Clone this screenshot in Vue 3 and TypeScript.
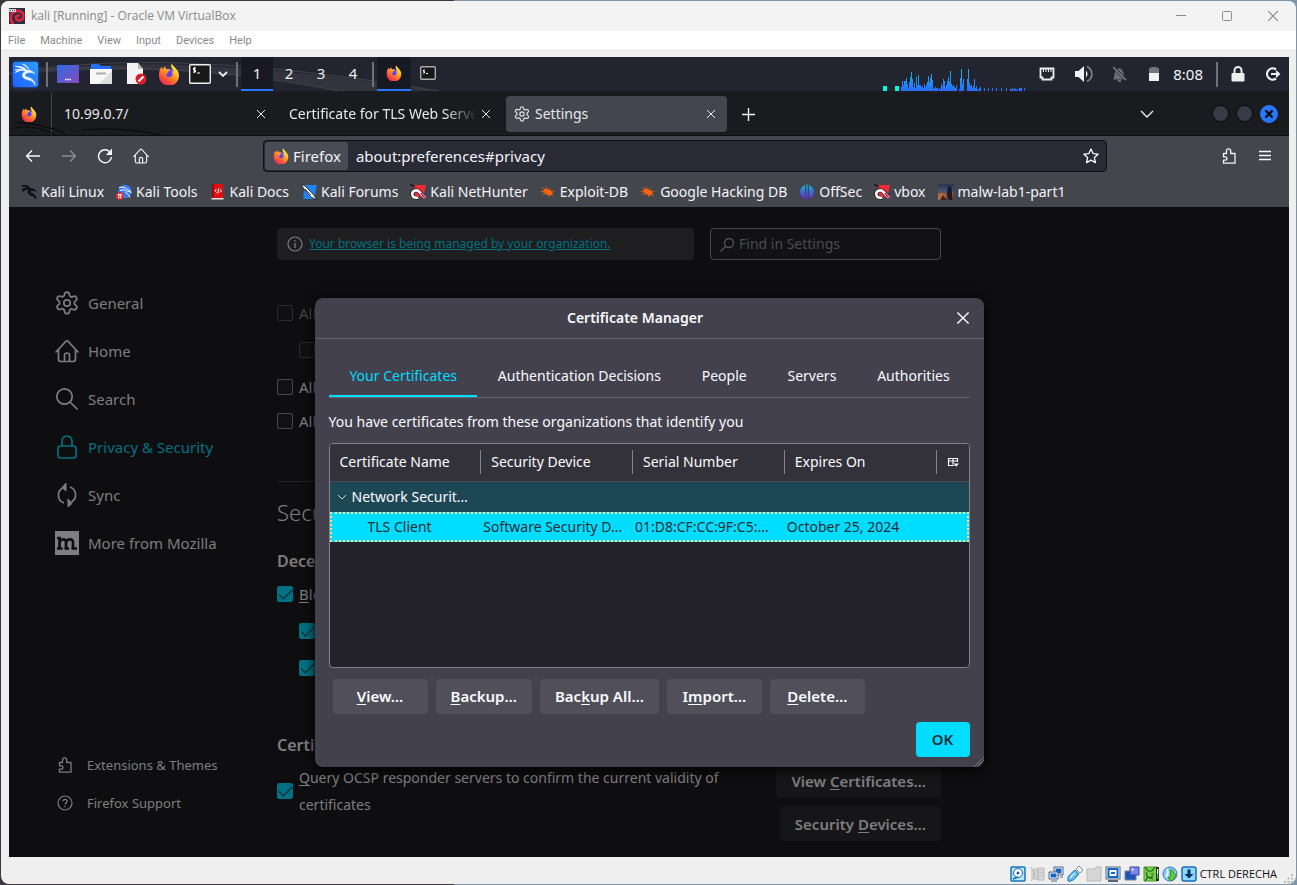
<script setup lang="ts">
import { ref } from 'vue'

const menus: string[] = ['File', 'Machine', 'View', 'Input', 'Devices', 'Help']
const workspaces: number[] = [1, 2, 3, 4]

interface Bookmark { label: string; icon: string }
const bookmarks: Bookmark[] = [
  { label: 'Kali Linux', icon: 'dragon-dark' },
  { label: 'Kali Tools', icon: 'tools' },
  { label: 'Kali Docs', icon: 'docs' },
  { label: 'Kali Forums', icon: 'forums' },
  { label: 'Kali NetHunter', icon: 'nethunter' },
  { label: 'Exploit-DB', icon: 'bug' },
  { label: 'Google Hacking DB', icon: 'bug' },
  { label: 'OffSec', icon: 'offsec' },
  { label: 'vbox', icon: 'nethunter' },
  { label: 'malw-lab1-part1', icon: 'photo' },
]

interface Category { label: string; icon: string }
const categories: Category[] = [
  { label: 'General', icon: 'gear' },
  { label: 'Home', icon: 'home' },
  { label: 'Search', icon: 'search' },
  { label: 'Privacy & Security', icon: 'padlock' },
  { label: 'Sync', icon: 'sync' },
  { label: 'More from Mozilla', icon: 'mozilla' },
]
const activeCategory = ref('Privacy & Security')

const tabs: string[] = ['Your Certificates', 'Authentication Decisions', 'People', 'Servers', 'Authorities']
const activeTab = ref('Your Certificates')
const columns: string[] = ['Certificate Name', 'Security Device', 'Serial Number', 'Expires On']

interface Action { before: string; key: string; after: string }
const actions: Action[] = [
  { before: '', key: 'V', after: 'iew…' },
  { before: '', key: 'B', after: 'ackup…' },
  { before: 'Bac', key: 'k', after: 'up All…' },
  { before: 'I', key: 'm', after: 'port…' },
  { before: '', key: 'D', after: 'elete…' },
]

const address = ref('about:preferences#privacy')
const query = ref('')

const load: number[] = [
  4, 10, 6, 10, 10, 13, 7, 3, 9, 14, 19, 12, 4, 8, 3, 14, 6, 16, 6, 6, 4, 5, 3, 7, 4, 6, 9, 15, 9, 13, 17, 11, 2, 3,
  4, 3, 3, 1, 3, 2, 7, 5, 12, 10, 4, 6, 10, 14, 9, 20, 7, 5, 6, 4, 3, 6, 0, 0, 2, 13, 22, 7, 12, 0, 0, 0, 12, 22, 8, 5,
  6, 3, 5, 12, 3, 5, 2, 1, 3, 4, 0, 0, 0, 3, 0, 0, 0, 3, 0, 0, 0, 3, 0, 0, 0, 3, 0, 0, 0, 0, 3, 0, 0, 0, 0, 3, 0, 0,
  0, 2, 2, 3, 1, 3, 2, 1, 2, 0, 3, 3, 3, 0, 0, 3,
]

const devices: string[] = ['disk', 'optical', 'network', 'usb', 'folder', 'display', 'record', 'cpu', 'mouse', 'host']
</script>

<template>
  <div class="desktop">
    <svg class="sprite" width="0" height="0" aria-hidden="true">
      <defs>
        <linearGradient id="fx-fire" x1="0.8" y1="0.1" x2="0.2" y2="1">
          <stop offset="0" stop-color="#fff24a" /><stop offset="0.4" stop-color="#ff9a24" />
          <stop offset="0.75" stop-color="#ff4a3c" /><stop offset="1" stop-color="#e3206a" />
        </linearGradient>
        <linearGradient id="desk" x1="0" y1="0" x2="1" y2="1">
          <stop offset="0" stop-color="#2b6be0" /><stop offset="1" stop-color="#8a4ac0" />
        </linearGradient>
        <linearGradient id="off" x1="0" y1="0" x2="0" y2="1">
          <stop offset="0" stop-color="#0fb6d8" /><stop offset="1" stop-color="#6a1fe0" />
        </linearGradient>
        <linearGradient id="load" gradientUnits="userSpaceOnUse" x1="0" y1="0" x2="0" y2="24">
          <stop offset="0" stop-color="#14c4dc" /><stop offset="1" stop-color="#276cff" />
        </linearGradient>
        <linearGradient id="sky" x1="0" y1="0" x2="0" y2="1">
          <stop offset="0" stop-color="#2a3350" /><stop offset="0.5" stop-color="#4a5872" />
          <stop offset="0.6" stop-color="#8c4f2c" /><stop offset="1" stop-color="#5a2f24" />
        </linearGradient>
      </defs>
      <symbol id="firefox" viewBox="0 0 22 22">
        <circle cx="11" cy="12.5" r="7" fill="#5a45e8" />
        <path d="M14 0.500c.5 2.200 2 3 3.600 4.700 2.200 2.300 3.600 4.600 3.400 8A10 9.600 0 0 1 1 13C.7 9 1.900 6 3.400 3.700c.3 1 .8 1.700 1.300 2.200C6 3.900 7.600 3.400 7.600 3.400c-.5 1.200.2 2.600 1.800 2.800l2.900.4c-.2 1.100-1.100 1.700-2.600 2.300-.5 1.400.2 1.700-1.500 2.700-.2 2.700 3.200 3.500 5.100 2 1.800-1.500 1.500-4.100-.4-5.600 1.500 0 2.300.8 2.700 1.500C15.400 6 11.500 4.500 14 .5z" fill="url(#fx-fire)" />
      </symbol>
      <symbol id="dragon" viewBox="0 0 24 24">
        <path d="M1.500 3.500c5-.2 9.500 1 12 4 3.500.1 6 1 8 3.500-2.500-1.500-5-1.500-7.500-.8-3 .9-3.500 3.300-1 4.300 4 1.300 8 2.500 9 8.500-2-4.500-5-5-9-6-5-1.300-5.500-6-1-8.500C9.500 6 6 4.500 1.500 3.500zM1 7.500c4-1.200 7.500-1 10 .2C7.800 7.500 5 7.800 1.500 10c1.500-2.200 3.500-2.700 5-2.900-2-.2-3.500 0-5.500.4zM9 1.200c3.500.8 5.500 2.800 6.500 5.300C13.500 4 12 3 9 1.200z" fill="currentColor" stroke="currentColor" stroke-width=".8" />
      </symbol>
      <symbol id="dragon-dark" viewBox="0 0 16 16">
        <path d="M0.500 1.500C5 1 8 2 9.500 4.800c2.500 0 4 .5 5.500 2.500-3-1.600-6-.7-6.200.7-.2 1.500 5.700.5 6.200 7-1.800-4.300-7-2.500-8-6.500C6.700 6.600 8 5.500 8 5 6 3 3.500 2.500.5 1.500zM1 5.500C3.500 4 6 4 7.500 5 5 5 3 5.800 1 8" fill="#101114" stroke="#101114" />
      </symbol>
      <symbol id="tools" viewBox="0 0 16 16">
        <circle cx="9" cy="7.500" r="6.800" fill="#3a7cf0" />
        <path d="M3 3.500c4-1 7 0 8 2 2 0 3 1 4 3-3-2-5-1-5 0 0 1.500 3 1 3.500 5M4 6.500c3-1 5-.5 6 0" fill="none" stroke="#fff" />
        <circle cx="3.800" cy="12" r="3.800" fill="#e8262c" />
        <path d="M1.800 10.500h4M2.800 10.500v4M4.800 10.500v4" stroke="#fff" />
      </symbol>
      <symbol id="docs" viewBox="0 0 16 16">
        <path d="M2 0h11v14H2z" fill="#e00d10" /><path d="M2 0h2v14H2z" fill="#9a080c" />
        <path d="M1.500 14h12v1.500h-12z" fill="#f2e4e4" />
        <path d="M6.500 5 4.800 6.800l1.700 1.700M9.800 5l1.700 1.700-1.700 1.800M8.800 4.500l-1.200 5" fill="none" stroke="#fff" />
      </symbol>
      <symbol id="forums" viewBox="0 0 16 16">
        <path d="M4 1h12l-3 14H2z" fill="#1f83f4" />
        <path d="M0 0l4 2 8 8 4 6-6-3-7-8z" fill="#fff" stroke="#14161c" stroke-width=".8" /><path d="M4 5l6 6" stroke="#14161c" stroke-width=".8" />
      </symbol>
      <symbol id="nethunter" viewBox="0 0 16 16">
        <path d="M3 1h13l-3 13-8-2z" fill="#f02b34" />
        <path d="M0 1c3-.5 4 1 5 2" fill="none" stroke="#14161c" stroke-width="1.500" />
        <path d="M15 14 9 7.500C6 5 2.200 7 2.200 10S5.500 14.500 8 14" fill="none" stroke="#14161c" stroke-width="4" />
        <path d="M15 14 9 7.500C6 5 2.200 7 2.200 10S5.500 14.500 8 13.500" fill="none" stroke="#fff" stroke-width="2.600" />
        <path d="m11 9 4 5.500" stroke="#e01540" stroke-width="1.500" />
      </symbol>
      <symbol id="bug" viewBox="0 0 16 16">
        <ellipse cx="8" cy="8" rx="5" ry="2.800" transform="rotate(28 8 8)" fill="#f2640f" />
        <path d="M1.500 3.500l4 2.500M6 2.500l1 3M.5 7.500l3.500 0M3.500 11.500l2-2M8.500 13l0-2M12 11l2 1.500M11 7l4 .5M1.500 10.500l3-2M10 5l1-1" stroke="#f2640f" stroke-width=".7" fill="none" />
      </symbol>
      <symbol id="offsec" viewBox="0 0 16 16">
        <path d="M6 1v14A7.500 7.500 0 0 1 6 1zM10 1v14a7.500 7.500 0 0 0 0-14zM7.300 .5h1.400v15H7.300z" fill="url(#off)" />
      </symbol>
      <symbol id="photo" viewBox="0 0 16 16">
        <path d="M0 0h16v16H0z" fill="url(#sky)" /><path d="M10 2h3l1 5v9h-3l-2-6z" fill="#191c2c" /><path d="M0 10l4-1 4 2v5H0z" fill="#b46a3c" /><path d="m2 16 3-5 4 5z" fill="#3b2530" />
      </symbol>
      <symbol id="gear" viewBox="0 0 24 24">
        <path d="M9.700 3.200Q10 1 12 1t2.300 2.200l.3 1.500 1.700 1 1.500-.6q2-.8 3 .9t-.7 3.100l-1.200 1v2l1.200 1q1.700 1.400.7 3.100t-3 .9l-1.500-.6-1.700 1-.3 1.500Q14 21 12 21t-2.300-2.200l-.3-1.500-1.700-1-1.500.6q-2 .8-3-.9t.7-3.100l1.200-1v-2l-1.200-1q-1.700-1.400-.7-3.100t3-.9l1.500.6 1.700-1z" transform="translate(-1 0) scale(1.08)" fill="none" stroke="currentColor" stroke-width="1.600" stroke-linejoin="round" />
        <circle cx="12" cy="12" r="3.200" fill="none" stroke="currentColor" stroke-width="1.700" />
      </symbol>
      <symbol id="home" viewBox="0 0 24 24">
        <path d="M1 13 11 2.200q1-.8 2 0L23 13M3.500 10.500V20q0 2.500 2.500 2.500h12q2.500 0 2.500-2.500v-9.500M9.500 22v-6q0-2 2.500-2t2.500 2v6" fill="none" stroke="currentColor" stroke-width="1.700" stroke-linecap="round" />
      </symbol>
      <symbol id="search" viewBox="0 0 24 24">
        <circle cx="9.500" cy="9.500" r="7.700" fill="none" stroke="currentColor" stroke-width="1.700" /><path d="m15 15 7.500 7.500" stroke="currentColor" stroke-width="1.700" />
      </symbol>
      <symbol id="padlock" viewBox="0 0 24 24">
        <rect x="3" y="11" width="18" height="12" rx="2.500" fill="none" stroke="currentColor" stroke-width="1.700" /><path d="M7 11V6a5 5 0 0 1 10 0v5" fill="none" stroke="currentColor" stroke-width="1.700" />
      </symbol>
      <symbol id="sync" viewBox="0 0 24 24">
        <path d="M7.500 5A8.300 8.300 0 0 0 9 20M16.500 19A8.300 8.300 0 0 0 15 4" fill="none" stroke="currentColor" stroke-width="1.700" />
        <path d="M11 0v8l-4-3.500zM13 16v8l4-3.500z" fill="currentColor" stroke="currentColor" />
      </symbol>
      <symbol id="mozilla" viewBox="0 0 24 24">
        <path d="M0 0h24v24H0z" fill="currentColor" />
        <path d="M2 7h4M4.500 7v10M2 17.500h5.500M11 17.500V11c0-4-6.500-3-6.500 1M9.500 17.500h4.500M18 17V11c0-4-7-3.500-7 1M16.500 17.500H22" fill="none" stroke="#0e0e10" stroke-width="2.700" />
      </symbol>
      <symbol id="puzzle" viewBox="0 0 16 16">
        <path d="M2.500 5.500h3V3a2 2 0 0 1 4.200 0v2.500h4.300v9.700H2.500v-3h1.800a1.700 1.700 0 0 0 0-3.400H2.500z" fill="none" stroke="currentColor" stroke-width="1.300" stroke-linejoin="round" />
      </symbol>
      <symbol id="help" viewBox="0 0 16 16">
        <circle cx="8" cy="8" r="7" fill="none" stroke="currentColor" stroke-width="1.200" /><path d="M6 6.300a2 2 0 1 1 3 1.800q-1 .6-1 1.400M8 11v1.300" fill="none" stroke="currentColor" stroke-width="1.300" />
      </symbol>
      <symbol id="close" viewBox="0 0 10 10"><path d="m1 1 8 8M9 1 1 9" stroke="currentColor" stroke-width="1" /></symbol>
      <symbol id="disk" viewBox="0 0 16 16">
        <rect x="1" y="1" width="14" height="14" rx="1" fill="#b5e6fa" stroke="#1674b8" stroke-width="1.500" /><circle cx="8" cy="7" r="4.500" fill="#fff" stroke="#1d5fc0" /><circle cx="8" cy="7" r="1.500" fill="#1d5fc0" /><path d="M3 13l5-2" stroke="#1d5fc0" stroke-width="1.500" />
      </symbol>
      <symbol id="optical" viewBox="0 0 16 16">
        <path d="M2 1c4 3 4 11 0 14M5 3h4v10H5z" fill="#d6d6d6" stroke="#b8b8b8" /><path d="M9 2h6v12H9z" fill="#dedede" stroke="#b4b4b4" /><path d="M11 4v8M13 4v8" stroke="#aaa" stroke-dasharray="1 1" />
      </symbol>
      <symbol id="network" viewBox="0 0 16 16">
        <path d="M6 1h9v8H6z" fill="#1663c8" stroke="#62666e" /><path d="M7 2h7v6H7z" fill="#1663c8" stroke="#fff" /><path d="M1 6h9v7H1z" fill="#1663c8" stroke="#62666e" /><path d="M2 7h7v5H2z" fill="#1663c8" stroke="#fff" /><path d="M3 15h6M12 11h3" stroke="#62666e" />
      </symbol>
      <symbol id="usb" viewBox="0 0 16 16">
        <path d="M9 3 12 0l4 4-3 3z" fill="#f4f4f4" stroke="#888" /><path d="M1 15c-1-4 1-6 7-11l4 4C8 13 5 16 1 15z" fill="#58b8f4" stroke="#1878c0" /><path d="M3 12l5-5" stroke="#d8f2ff" stroke-width="1.500" />
      </symbol>
      <symbol id="folder" viewBox="0 0 16 16"><path d="M1 3h8l1-2h5v14H1z" fill="#d6d6d6" stroke="#b9b9b9" /></symbol>
      <symbol id="display" viewBox="0 0 16 16">
        <rect x="1" y="1" width="14" height="12" fill="#e8f4ff" stroke="#55657c" /><rect x="3.500" y="3" width="9" height="8" fill="#fff" stroke="#1663c8" stroke-width="2" /><path d="M6 6h4v2H6z" fill="#1663c8" /><path d="M3 15h10" stroke="#55657c" stroke-width="2" />
      </symbol>
      <symbol id="record" viewBox="0 0 16 16">
        <path d="M1 5h11v9H1z" fill="#1558b8" stroke="#7c8494" /><path d="M6 1h9v8H6z" fill="#7d86e8" stroke="#3a40a8" /><path d="M7 2h3v3H7z" fill="#b8bcff" />
      </symbol>
      <symbol id="cpu" viewBox="0 0 16 16">
        <path d="M1 1h13v14H1z" fill="#7ad04c" stroke="#4a9a2a" /><path d="M2 1l3 4 4 0 3-4M2 15l3-4 5 2M4 6c-2 5 3 7 6 4M8 8h3" fill="none" stroke="#1c5c10" stroke-width="1.100" /><path d="M14.500 1v14" stroke="#111" stroke-width="2.500" /><path d="M14.500 3v5" stroke="#fff" /><path d="M14.500 8v5" stroke="#4ac020" />
      </symbol>
      <symbol id="mouse" viewBox="0 0 16 16">
        <circle cx="8" cy="8" r="7" fill="#86ccf8" stroke="#2a78c8" /><path d="M8 4c5-1 2 4 6 5l-4 6-4-3 3-2z" fill="#6ccf30" stroke="#2f8a1a" /><path d="M5 3c1 2 1 5-1 8" fill="none" stroke="#fff" stroke-width="1.500" />
      </symbol>
      <symbol id="host" viewBox="0 0 16 16">
        <rect x="1" y="1" width="14" height="14" rx="2" fill="#8cd8fa" stroke="#1a6cb8" stroke-width="1.500" /><path d="M6.500 3.500h3V8h3L8 12.500 3.500 8h3z" fill="#0c2c5c" />
      </symbol>
    </svg>

    <div class="vm">
      <header class="titlebar">
        <svg class="i16" viewBox="0 0 16 16"><path d="M0 0h16v16H0z" fill="#2a3040" /><path d="M4.500 16c-3-3-4-8-1-11 4-4 11-2 11 3 0 5-7 6-7.500 2-.3-2.500 3-3 3.500-1.500" fill="none" stroke="#e8203f" stroke-width="2.600" /><path d="M0 1h7v3H0z" fill="#d8d8dc" /><path d="M1 2.500h5" stroke="#555" stroke-dasharray="1 1" /></svg>
        <h1>kali [Running] - Oracle VM VirtualBox</h1>
        <div class="win-buttons">
          <button aria-label="Minimize"><svg class="i12" viewBox="0 0 12 12"><path d="M1 5.500h10" stroke="currentColor" /></svg></button>
          <button aria-label="Maximize"><svg class="i12" viewBox="0 0 12 12"><rect x="1.500" y="1.500" width="9" height="9" rx="1" fill="none" stroke="currentColor" /></svg></button>
          <button aria-label="Close window"><svg class="i12"><use href="#close" /></svg></button>
        </div>
      </header>
      <nav class="menubar"><button v-for="m in menus" :key="m">{{ m }}</button></nav>

      <div class="screen">
        <div class="panel">
          <svg class="swoosh" viewBox="0 0 430 34" aria-hidden="true">
            <path d="M0 17C90 2 220 2 430 34H330C230 12 110 8 0 18z" fill="#3a3b44" opacity=".7" />
            <path d="M0 16C120-4 260 6 430 34M40 12C140 8 240 16 330 34" fill="none" stroke="#54555c" opacity=".6" />
          </svg>
          <div class="launchers">
            <button class="kali" aria-label="Applications"><svg width="23" height="23"><use href="#dragon" /></svg></button>
            <i class="sep"></i>
            <button aria-label="Show desktop"><svg width="22" height="22" viewBox="0 0 22 22"><path d="M0 2h22v18H0z" fill="url(#desk)" /><path d="M8 16.500h6" stroke="#fff" stroke-width="1.500" stroke-dasharray="1.500 .7" /></svg></button>
            <button aria-label="Files"><svg width="22" height="22" viewBox="0 0 22 22"><path d="M1 2q0-1 1-1h7l2 2h9q1 0 1 1v4H1z" fill="#2470f0" /><path d="M0 6h22v15H0z" fill="#f7f7f7" /><path d="m22 8-13 13h13z" fill="#dedede" /><path d="M7 10.500h8" stroke="#aaa" stroke-width="2.200" stroke-linecap="round" /></svg></button>
            <button aria-label="Text editor"><svg width="24" height="22" viewBox="0 0 24 22"><path d="M4 0h11l5 6v15H4z" fill="#f4f4f4" /><path d="m15 0 5 6h-5z" fill="#bbb" /><circle cx="18" cy="16" r="5.500" fill="#d81f26" /><path d="m15.500 18.500 5-5" stroke="#fff" stroke-width="2" /></svg></button>
            <button aria-label="Firefox"><svg width="22" height="22"><use href="#firefox" /></svg></button>
            <button class="shell" aria-label="Terminal"><svg width="22" height="22" viewBox="0 0 22 22"><rect x=".7" y="1.700" width="20.600" height="18.600" rx="1" fill="#181818" stroke="#eee" stroke-width="1.400" /><path d="M7 5H4.500v2H6.500v2H4M5.500 4v6M8 10h3" fill="none" stroke="#fff" /></svg></button>
            <button class="tight" aria-label="More terminals"><svg width="10" height="8" viewBox="0 0 10 8"><path d="m1 2 4 4 4-4" fill="none" stroke="#eee" stroke-width="1.800" /></svg></button>
            <i class="sep"></i>
          </div>
          <div class="spaces">
            <button v-for="w in workspaces" :key="w" :class="{ on: w === 1 }">{{ w }}</button>
          </div>
          <i class="sep"></i>
          <div class="tasks">
            <button class="on" aria-label="Firefox window"><svg width="16" height="16"><use href="#firefox" /></svg></button>
            <button aria-label="Terminal window"><svg width="16" height="16" viewBox="0 0 16 16"><rect x=".7" y="1.700" width="14.600" height="12.600" rx="1" fill="#181818" stroke="#aaa" stroke-width="1.400" /><path d="M5 5H3.500v1.500h1V8H3M6 8.500h2" fill="none" stroke="#fff" /></svg></button>
          </div>
          <svg class="load" width="150" height="24" viewBox="0 0 150 24" aria-hidden="true">
            <path d="M0 19h4v5H0zM12 19h4v5h-4z" fill="#00ffd5" />
            <rect v-for="(h, n) in load" :key="n" :x="18 + n" :y="24 - h" width="1" :height="h" fill="url(#load)" />
          </svg>
          <div class="tray">
            <svg width="16" height="16" viewBox="0 0 16 16"><path d="M1.500 2.500h13v9h-2v2h-9v-2h-2z" fill="none" stroke="#eee" stroke-width="1.800" /><path d="M4.500 2v4M7 2v4M9.500 2v4M12 2v4" stroke="#eee" /></svg>
            <svg width="18" height="18" viewBox="0 0 18 18"><path d="M0 6h3.500L9 1v16l-5.500-5H0z" fill="#f2f2f2" /><path d="M11 5.500q3 3.500 0 7z" fill="#f2f2f2" /><path d="M12 1.500c6.500 3.500 6.500 11.500 0 15" fill="none" stroke="#85868c" stroke-width="1.600" /></svg>
            <svg width="16" height="16" viewBox="0 0 16 16"><path d="M0 13.500c2-2 1-7 3-9.500 2-2 5-2 6.500.5 1.500 2.500 1 6 3 9zM5 14h3v2H5z" fill="#6c6d74" /><path d="m0 1 14 14" stroke="#222430" stroke-width="3" /><path d="m0 1 13 13" stroke="#85868c" stroke-width="1.300" /></svg>
            <svg width="12" height="16" viewBox="0 0 12 16"><path d="M2 1h6v1h2v5H0V2h2z" fill="#75767c" /><path d="M0 7h10v8H0z" fill="#f2f2f2" /></svg>
            <time>8:08</time>
            <i class="sep"></i>
            <button aria-label="Lock"><svg width="14" height="16" viewBox="0 0 14 16"><rect x=".5" y="7" width="13" height="8.500" rx="1" fill="#eee" /><path d="M3.500 8V4.500a3.500 3.500 0 0 1 7 0V8" fill="none" stroke="#eee" stroke-width="2" /></svg></button>
            <button aria-label="Log out"><svg width="16" height="16" viewBox="0 0 16 16"><path d="M11 3.500A5.600 5.600 0 1 0 11 12.500" fill="none" stroke="#eee" stroke-width="2.200" /><path d="M6 7h5V4l4.500 4-4.500 4V9H6z" fill="#eee" /></svg></button>
          </div>
        </div>

        <div class="tabstrip">
          <svg class="swoosh" viewBox="0 0 430 43" aria-hidden="true">
            <path d="M0 30q40 3 53 13M0 36q24-4 42 7M70 38q40-4 80 5" fill="none" stroke="#0d0d11" stroke-width="1.500" />
          </svg>
          <div class="pinned"><svg width="16" height="16"><use href="#firefox" /></svg></div>
          <div class="tab first"><span>10.99.0.7/</span><button aria-label="Close tab 10.99.0.7"><svg class="i10"><use href="#close" /></svg></button></div>
          <div class="tab second"><span class="fade">Certificate for TLS Web Server</span><button aria-label="Close certificate tab"><svg class="i10"><use href="#close" /></svg></button></div>
          <div class="tab current"><svg class="i16"><use href="#gear" /></svg><span>Settings</span><button aria-label="Close Settings tab"><svg class="i10"><use href="#close" /></svg></button></div>
          <button class="plus" aria-label="New tab"><svg width="13" height="13" viewBox="0 0 13 13"><path d="M6.500 0v13M0 6.500h13" stroke="#f4f4f4" stroke-width="1.400" /></svg></button>
          <button class="all-tabs" aria-label="List all tabs"><svg width="14" height="10" viewBox="0 0 14 10"><path d="m1 2 6 6 6-6" fill="none" stroke="#eee" stroke-width="1.400" /></svg></button>
          <div class="lights">
            <button aria-label="Minimize browser"></button><button aria-label="Maximize browser"></button>
            <button class="blue" aria-label="Close browser"><svg width="10" height="10" viewBox="0 0 10 10"><path d="m1.500 1.500 7 7M8.500 1.500l-7 7" stroke="#0c0d12" stroke-width="2.400" /></svg></button>
          </div>
        </div>

        <div class="toolbar">
          <div class="nav">
            <button aria-label="Back"><svg class="i16" viewBox="0 0 16 16"><path d="M15 8H1.500M7 2.500 1.500 8 7 13.500" fill="none" stroke="#fbfbfe" stroke-width="1.300" /></svg></button>
            <button aria-label="Forward"><svg class="i16" viewBox="0 0 16 16"><path d="M1 8h13.500M9 2.500 14.500 8 9 13.500" fill="none" stroke="#8b8d93" stroke-width="1.300" /></svg></button>
            <button aria-label="Reload"><svg class="i16" viewBox="0 0 16 16"><path d="M12.500 3.500A6.500 6.500 0 1 0 14.500 9" fill="none" stroke="#fbfbfe" stroke-width="1.400" /><path d="M15 .5V7H9z" fill="#fbfbfe" /></svg></button>
            <button aria-label="Home"><svg class="i16"><use href="#home" /></svg></button>
          </div>
          <div class="urlbar">
            <span class="identity"><svg class="i16"><use href="#firefox" /></svg>Firefox</span>
            <input v-model="address" aria-label="Address" type="text" />
            <button aria-label="Bookmark this page"><svg class="i16" viewBox="0 0 16 16"><path d="m8 1 2.100 4.600 5 .6-3.700 3.400 1 5L8 12.100l-4.400 2.500 1-5L.900 6.200l5-.6z" fill="none" stroke="#fbfbfe" stroke-width="1.300" stroke-linejoin="round" /></svg></button>
          </div>
          <div class="extras">
            <button aria-label="Extensions"><svg class="i16"><use href="#puzzle" /></svg></button>
            <button aria-label="Menu"><svg class="i16" viewBox="0 0 16 16"><path d="M2 3.500h12M2 7.500h12M2 11.500h12" stroke="#fbfbfe" stroke-width="1.300" /></svg></button>
          </div>
        </div>

        <nav class="bookmarks">
          <a v-for="b in bookmarks" :key="b.label" href="#"><svg class="i16"><use :href="'#' + b.icon" /></svg>{{ b.label }}</a>
        </nav>

        <div class="page">
          <nav class="sidebar">
            <a v-for="c in categories" :key="c.label" href="#" :class="{ on: c.label === activeCategory }" @click.prevent="activeCategory = c.label">
              <svg width="24" height="24"><use :href="'#' + c.icon" /></svg>{{ c.label }}
            </a>
            <div class="foot">
              <a href="#"><svg class="i16"><use href="#puzzle" /></svg>Extensions &amp; Themes</a>
              <a href="#"><svg class="i16"><use href="#help" /></svg>Firefox Support</a>
            </div>
          </nav>

          <main class="prefs">
            <div class="top">
              <div class="notice">
                <svg class="i16" viewBox="0 0 16 16"><circle cx="8" cy="8" r="7" fill="none" stroke="currentColor" stroke-width="1.200" /><path d="M8 7v5M8 4v1.500" stroke="currentColor" stroke-width="1.300" /></svg>
                <a href="#">Your browser is being managed by your organization.</a>
              </div>
              <label class="find">
                <svg width="15" height="15" viewBox="0 0 15 15"><circle cx="9" cy="6" r="4.500" fill="none" stroke="currentColor" stroke-width="1.300" /><path d="m6 9-5.500 5.500" stroke="currentColor" stroke-width="1.300" /></svg>
                <input v-model="query" type="search" placeholder="Find in Settings" aria-label="Find in Settings" />
              </label>
            </div>
            <div class="group first">
              <label class="row dim"><input type="checkbox" disabled />All</label>
              <label class="row dim nested"><input type="checkbox" disabled aria-label="Nested option" /></label>
              <label class="row"><input type="checkbox" />All</label>
              <label class="row short"><input type="checkbox" />All</label>
            </div>
            <hr />
            <h2>Secu</h2>
            <h3>Dece</h3>
            <div class="group">
              <label class="row"><input type="checkbox" checked /><span><u>B</u>lo</span></label>
              <label class="row nested"><input type="checkbox" checked aria-label="Block downloads" /></label>
              <label class="row nested"><input type="checkbox" checked aria-label="Warn about software" /></label>
            </div>
            <h3 class="certs">Certi</h3>
            <div class="ocsp">
              <label><input type="checkbox" checked /><span><u>Q</u>uery OCSP responder servers to confirm the current validity of certificates</span></label>
              <div class="side-buttons">
                <button>View <u>C</u>ertificates…</button>
                <button>Security <u>D</u>evices…</button>
              </div>
            </div>
          </main>

          <div class="overlay">
            <section class="dialog" role="dialog" aria-label="Certificate Manager">
              <header>
                <h2>Certificate Manager</h2>
                <button aria-label="Close dialog"><svg width="14" height="14"><use href="#close" /></svg></button>
              </header>
              <div class="body">
                <div class="dtabs" role="tablist">
                  <button v-for="t in tabs" :key="t" role="tab" :class="{ on: t === activeTab }" @click="activeTab = t">{{ t }}</button>
                </div>
                <p>You have certificates from these organizations that identify you</p>
                <div class="tree">
                  <table>
                    <colgroup><col /><col /><col /><col /><col class="pick" /></colgroup>
                    <thead>
                      <tr>
                        <th v-for="c in columns" :key="c"><span>{{ c }}</span></th>
                        <th class="picker"><button aria-label="Select columns"><svg width="12" height="11" viewBox="0 0 12 11"><path d="M7 8.500H1.500v-7h9V5M1.500 4h9M6 1.500v6" fill="none" stroke="#fbfbfe" stroke-width="1.200" /><path d="M6.500 6.500h5.500L9.200 9.800z" fill="#fbfbfe" /></svg></button></th>
                      </tr>
                    </thead>
                    <tbody>
                      <tr class="parent"><td><svg width="10" height="8" viewBox="0 0 10 8"><path d="m1 1 4 4 4-4" fill="none" stroke="#cfd6da" /></svg>Network Securit…</td><td></td><td></td><td></td><td></td></tr>
                      <tr class="selected"><td>TLS Client</td><td>Software Security D…</td><td>01:D8:CF:CC:9F:C5:…</td><td>October 25, 2024</td><td></td></tr>
                    </tbody>
                  </table>
                </div>
                <div class="actions">
                  <button v-for="a in actions" :key="a.key">{{ a.before }}<u>{{ a.key }}</u>{{ a.after }}</button>
                </div>
                <div class="confirm"><button>OK</button></div>
              </div>
              <svg class="grip" width="10" height="10" viewBox="0 0 10 10" aria-hidden="true"><path d="M0 10 10 0M3 10l7-7M6 10l4-4" stroke="#85848e" stroke-width=".8" /></svg>
            </section>
          </div>
        </div>
      </div>

      <footer class="status">
        <svg v-for="d in devices" :key="d" class="i16"><use :href="'#' + d" /></svg>
        <span>CTRL DERECHA</span>
        <svg class="sizer" width="10" height="10" viewBox="0 0 10 10" aria-hidden="true"><path d="M7 0h2v2H7zM7 3.500h2v2H7zM3.500 3.500h2v2h-2zM7 7h2v2H7zM3.500 7h2v2h-2zM0 7h2v2H0z" fill="#bbb" /></svg>
      </footer>
    </div>
  </div>
</template>

<style>
body { margin: 0; background: #3b3843; }
</style>

<style scoped>
* { box-sizing: border-box; }
.desktop { min-height: 100vh; display: flex; padding: 1px; background: linear-gradient(to right, #3b3843 35%, #7f95aa 35%); font: 15px/20px "Noto Sans", "Open Sans", sans-serif; color: #f4f4f7; }
.sprite { position: absolute; }
.vm { flex: 1; min-width: 0; display: flex; flex-direction: column; background: #efefef; border-radius: 8px; overflow: hidden; }
button { font: inherit; color: inherit; background: none; border: 0; padding: 0; margin: 0; display: flex; align-items: center; justify-content: center; white-space: nowrap; }
svg { flex: none; display: block; }
a { color: inherit; text-decoration: none; }
h1, h2, h3, p { margin: 0; font: inherit; }
input { font: inherit; color: inherit; margin: 0; }
.i16 { width: 16px; height: 16px; }
.i12 { width: 12px; height: 12px; }
.i10 { width: 10px; height: 10px; }

.titlebar { height: 30px; display: flex; align-items: center; gap: 6px; padding: 0 17px 0 8px; background: #f3f3f3; color: #8a8a8a; font: 12px/16px "Open Sans", sans-serif; }
.win-buttons { margin-left: auto; display: flex; gap: 34px; }
.menubar { height: 18px; display: flex; align-items: center; gap: 15px; padding: 2px 7px 0; background: #fff; color: #8a8a8a; font: 11px/16px Roboto, sans-serif; }

.screen { flex: 1; margin: 8px 7px 0 8px; display: flex; flex-direction: column; background: #0e0e10; }
.panel { position: relative; height: 36px; display: flex; align-items: stretch; background: #222430; border-bottom: 2px solid #1b1c24; }
.panel > * { position: relative; }
.panel .swoosh, .tabstrip .swoosh { position: absolute; left: 0; top: 0; width: 430px; height: 100%; }
.sep { width: 2px; height: 25px; background: #707178; align-self: center; flex: none; }
.launchers { display: flex; align-items: center; gap: 11px; padding-left: 4px; }
.launchers .sep { margin: 0 -2px 0 -3px; }
.kali { width: 25px; height: 25px; background: linear-gradient(45deg, #1f5fff, #2ba0ff); border-radius: 2px; box-shadow: 0 0 3px #2470ff; }
.shell { margin-left: -2px; }
.tight { margin-left: -4px; }
.spaces { display: flex; margin-left: 5px; margin-right: 3px; }
.spaces button { width: 32px; color: #f0f0f0; border-bottom: 2px solid transparent; }
.spaces .on, .tasks .on { background: #181a23; border-bottom: 2px solid #2777ff; }
.tasks { display: flex; margin-left: 3px; }
.tasks button { width: 34px; border-bottom: 2px solid transparent; }
.load { margin-left: auto; align-self: flex-end; }
.tray { display: flex; align-items: center; gap: 20px; padding: 0 8px 0 6px; }
.tray .sep { margin: 0 -7px; }
.tray time { margin: 0 0 0 -8px; }

.tabstrip { position: relative; height: 43px; display: flex; align-items: center; background: #1a1b1f; border-bottom: 1px solid #0d0d10; }
.pinned { width: 43px; height: 42px; padding-right: 3px; display: flex; align-items: center; justify-content: center; border-right: 1px solid #45464c; }
.tab { height: 36px; width: 221px; display: flex; align-items: center; padding: 0 11px 0 8px; border-radius: 4px; min-width: 0; color: #e8e8ea; font-size: 14px; line-height: 22px; }
.tab.first { width: 225px; padding-left: 12px; }
.tab button { margin-left: auto; }
.tab.second { padding-right: 7px; }
.tab .fade { flex: 1; min-width: 0; white-space: nowrap; overflow: hidden; mask-image: linear-gradient(to left, transparent, #000 32px); margin: 0 4px; }
.tab.current { background: #43464e; gap: 5px; margin-left: 8px; }
.plus { margin-left: 15px; }
.all-tabs { margin-left: auto; margin-right: 58px; }
.lights { display: flex; gap: 7px; margin-right: 11px; }
.lights button { width: 17px; height: 17px; border-radius: 50%; background: #373b47; border: 1px solid #08080b; }
.lights .blue { background: #2777ff; border-color: #2777ff; width: 18px; height: 18px; }

.toolbar { height: 40px; display: flex; align-items: center; background: #44464e; padding: 0 16px; }
.nav, .extras { display: flex; gap: 20px; }
.urlbar { flex: 1; height: 32px; margin: 0 114px; display: flex; align-items: center; background: #282a36; border: 1px solid #101116; border-radius: 4px; padding: 1px 7px 1px 1px; }
.identity { height: 28px; display: flex; align-items: center; gap: 4px; padding: 0 7px 0 8px; background: #4a4c55; border-radius: 3px; }
.urlbar input { flex: 1; min-width: 0; background: none; border: 0; padding: 0 8px; outline: 0; }

.bookmarks { height: 31px; display: flex; align-items: center; gap: 12px; background: #44464e; padding: 0 12px; white-space: nowrap; font-size: 14px; }
.bookmarks a { display: flex; align-items: center; gap: 4px; }

.page { position: relative; flex: 1; display: flex; color: #7e7e81; }
.sidebar { width: 268px; padding: 72px 0 35px 46px; display: flex; flex-direction: column; }
.sidebar a { height: 48px; display: flex; align-items: center; gap: 9px; }
.sidebar .on { color: #007182; }
.foot { margin-top: auto; font-size: 13px; }
.sidebar .foot a { height: 38px; gap: 14px; padding-left: 2px; }
.prefs { flex: 0 1 664px; padding-top: 21px; }
.top { display: flex; gap: 16px; }
.notice { flex: 1; height: 32px; display: flex; align-items: center; gap: 6px; padding: 0 10px; background: #1e1e20; border-radius: 4px; font-size: 12px; }
.notice a { color: #007182; text-decoration: underline; }
.find { width: 231px; height: 32px; display: flex; align-items: center; gap: 4px; padding: 0 9px; border: 1px solid #48484d; border-radius: 4px; background: #121115; color: #55555a; font-size: 14px; }
.find input { flex: 1; min-width: 0; background: none; border: 0; padding: 0; outline: 0; }
.find input::placeholder { color: #4b4b4e; opacity: 1; }
.group.first { margin-top: 34px; }
.row { height: 37px; display: flex; align-items: center; gap: 6px; }
.row.short { height: 32px; }
.row.nested { padding-left: 22px; }
.row.dim { opacity: .5; }
input[type="checkbox"] { appearance: none; flex: none; width: 16px; height: 16px; border: 1px solid #48484d; border-radius: 2px; background: #121115; display: grid; place-items: center; }
input[type="checkbox"]:checked { background: #007182; border-color: #007182; }
input[type="checkbox"]:checked::after { content: ""; width: 12px; height: 6px; border: solid #101a1e; border-width: 0 0 1px 1px; transform: rotate(-45deg); margin-bottom: 3px; }
u { text-decoration: underline; text-underline-offset: 2px; }
hr { margin: 44px 0 0; border: 0; height: 1px; background: #242427; }
.prefs h2 { margin-top: 10px; font-size: 22px; line-height: 40px; font-weight: 300; }
.prefs h3 { margin-top: 19px; margin-bottom: 4px; font-size: 16px; line-height: 20px; font-weight: 600; }
.prefs h3.certs { margin-top: 49px; margin-bottom: 8px; }
.ocsp { display: flex; justify-content: space-between; align-items: flex-start; }
.ocsp label { display: flex; align-items: center; gap: 6px; width: 460px; padding-top: 1px; font-size: 14px; line-height: 27px; }
.side-buttons { display: flex; flex-direction: column; align-items: flex-end; gap: 8px; }
.side-buttons button { display: block; height: 35px; padding: 0 15px; border-radius: 4px; background: #161618; font-weight: 600; }

.overlay { position: absolute; inset: 0; display: flex; align-items: center; justify-content: center; color: #fbfbfe; font-size: 14px; }
.dialog { position: relative; width: 669px; background: #42414d; border-radius: 8px; box-shadow: 0 2px 12px #000; overflow: hidden; }
.dialog header { height: 41px; display: flex; align-items: center; border-bottom: 1px solid #66656f; padding: 0 14px 0 0; }
.dialog h2 { flex: 1; text-align: center; font-weight: 600; line-height: 22px; }
.body { padding: 15px 14px 10px; }
.dtabs { display: flex; height: 44px; border-bottom: 1px solid #66656f; }
.dtabs button { flex: 1 0 auto; padding: 4px 19px 0 20px; border-bottom: 2px solid transparent; }
.dtabs .on { color: #00ddff; border-color: #00ddff; }
.body p { margin: 14px 0 11px; line-height: 20px; }
.tree { height: 225px; border: 1px solid #85848e; border-radius: 4px; background: #23222b; overflow: hidden; }
table { width: 100%; table-layout: fixed; border-collapse: collapse; }
.pick { width: 32px; }
th { height: 38px; padding: 0; text-align: left; font-weight: 400; background: #33323b; border-bottom: 1px solid #4b4a52; }
th span { display: block; line-height: 24px; padding-left: 10px; border-right: 1px solid #85848e; white-space: nowrap; }
.picker button { width: 100%; }
td { height: 30px; padding: 0 0 0 2px; white-space: nowrap; }
.parent td { background: #1e4755; }
.parent td:first-child { padding-left: 7px; }
.parent svg { display: inline-block; margin-right: 5px; }
.selected { background: #00ddff; color: #2b2a33; outline: 2px dotted #ffe08a; outline-offset: -2px; }
.selected td:first-child { padding-left: 38px; }
.actions { display: flex; gap: 8px; padding: 11px 4px 8px; }
.actions button, .confirm button { display: block; height: 35px; padding: 0 15px; border-radius: 4px; background: #504f5a; font-size: 15px; font-weight: 600; }
.actions button { min-width: 95px; }
.confirm { display: flex; justify-content: flex-end; }
.confirm button { min-width: 54px; background: #00ddff; color: #2b2a33; }
.grip { position: absolute; right: 0; bottom: 0; }

.status { height: 27px; display: flex; align-items: center; justify-content: flex-end; gap: 3px; padding: 6px 2px 0 0; color: #111; font: 11px/16px "Open Sans", sans-serif; }
.status span { margin-right: 4px; }
.sizer { align-self: flex-end; }
</style>
